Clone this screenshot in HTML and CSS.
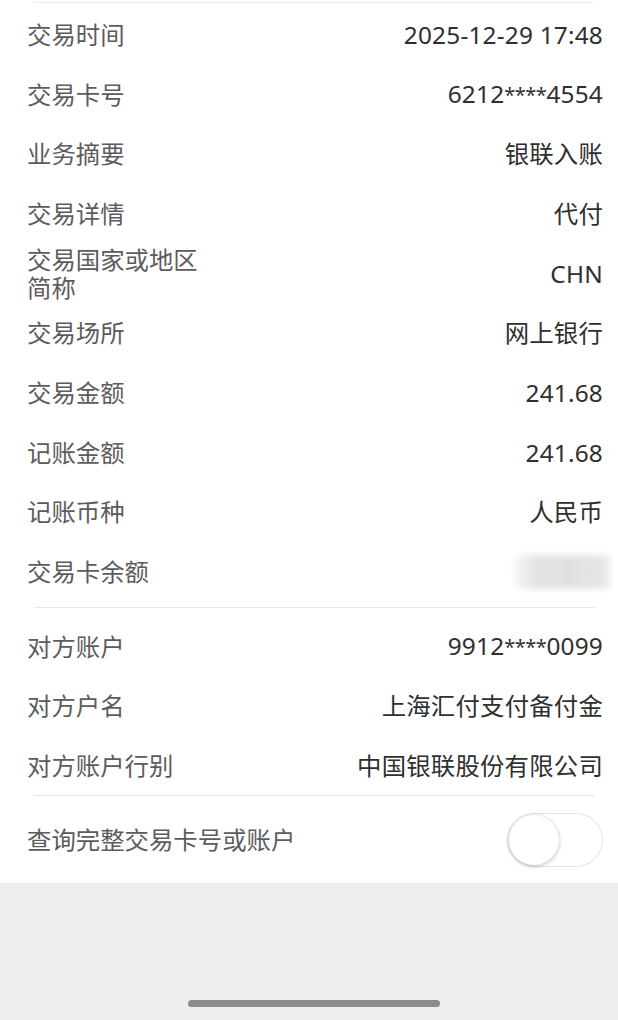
FILE: index.html
```html
<!DOCTYPE html>
<html lang="zh-CN">
<head>
<meta charset="utf-8">
<title>交易详情</title>
<link rel="stylesheet" href="styles.css">
</head>
<body>
<div class="page">
  <div class="card">
    <div class="rule rule-top"></div>
    <div class="section section-a">
      <div class="row"><span class="label">交易时间</span><span class="value">2025-12-29 17:48</span></div>
      <div class="row"><span class="label">交易卡号</span><span class="value">6212<span class="mask">****</span>4554</span></div>
      <div class="row"><span class="label">业务摘要</span><span class="value">银联入账</span></div>
      <div class="row"><span class="label">交易详情</span><span class="value">代付</span></div>
      <div class="row"><span class="label label-wrap">交易国家或地区简称</span><span class="value">CHN</span></div>
      <div class="row"><span class="label">交易场所</span><span class="value">网上银行</span></div>
      <div class="row"><span class="label">交易金额</span><span class="value">241.68</span></div>
      <div class="row"><span class="label">记账金额</span><span class="value">241.68</span></div>
      <div class="row"><span class="label">记账币种</span><span class="value">人民币</span></div>
      <div class="row"><span class="label">交易卡余额</span><span class="value value-blur"><span class="blur-box"></span></span></div>
    </div>
    <div class="rule rule-mid"></div>
    <div class="section section-b">
      <div class="row row-b"><span class="label">对方账户</span><span class="value">9912<span class="mask">****</span>0099</span></div>
      <div class="row row-b"><span class="label">对方户名</span><span class="value">上海汇付支付备付金</span></div>
      <div class="row row-b"><span class="label">对方账户行别</span><span class="value">中国银联股份有限公司</span></div>
    </div>
    <div class="rule rule-low"></div>
    <div class="row toggle-row">
      <span class="label">查询完整交易卡号或账户</span>
      <span class="switch"><span class="knob"></span></span>
    </div>
  </div>
  <div class="footer">
    <div class="home-bar"></div>
  </div>
</div>
</body>
</html>
```
FILE: styles.css
```css
html, body {
  margin: 0;
  padding: 0;
}
body {
  background: #ededed;
  font-family: "Noto Sans", "Noto Sans CJK SC", sans-serif;
  width: 618px;
  height: 1020px;
  overflow: hidden;
}
.page {
  display: flex;
  flex-direction: column;
  height: 1020px;
}
.card {
  background: #ffffff;
  height: 883px;
  box-sizing: border-box;
  padding-top: 2px;
}
.rule {
  height: 1px;
  background: #e9e9e9;
}
.rule-top {
  margin: 0 25px 0 34px;
  background: #efefef;
}
.rule-mid {
  margin: 5px 23px 0 34px;
}
.rule-low {
  margin: 0 23px 0 34px;
}
.section-a {
  padding-top: 2px;
}
.section-b {
  padding-top: 9px;
}
.row {
  display: flex;
  align-items: center;
  justify-content: space-between;
  height: 59.7px;
  padding: 0 15px 0 27px;
  font-size: 24.4px;
}
.row-b {
  height: 59.5px;
}
.label {
  color: #5c5c5c;
  line-height: 28px;
}
.label-wrap {
  max-width: 182px;
}
.value {
  color: #2f2f2f;
  line-height: 28px;
  white-space: nowrap;
  letter-spacing: 0.2px;
}
.mask {
  font-size: 0.82em;
  letter-spacing: -0.5px;
  vertical-align: 1px;
}
.value-blur {
  width: 96px;
  height: 40px;
  display: flex;
  align-items: center;
  margin-right: -8px;
}
.blur-box {
  display: block;
  width: 94px;
  height: 34px;
  background: linear-gradient(90deg, #f5f5f5 0%, #e3e3e3 25%, #e1e1e1 60%, #e8e8e8 100%);
  filter: blur(3px);
  border-radius: 8px 0 0 8px;
}
.toggle-row {
  height: 86px;
  padding-top: 2px;
  box-sizing: border-box;
}
.switch {
  position: relative;
  width: 96px;
  height: 54px;
  border-radius: 27px;
  border: 1px solid #e3e3e3;
  background: #ffffff;
  box-sizing: border-box;
}
.knob {
  position: absolute;
  left: 1px;
  top: 1px;
  width: 50px;
  height: 50px;
  border-radius: 50%;
  background: #ffffff;
  box-shadow: 0 1px 4px rgba(0, 0, 0, 0.28);
}
.footer {
  flex: 1;
  display: flex;
  flex-direction: column;
  justify-content: flex-end;
  align-items: center;
  padding-bottom: 13px;
}
.home-bar {
  width: 252px;
  height: 7px;
  border-radius: 4px;
  background: #8b8b8b;
  margin-left: 10px;
}
```
